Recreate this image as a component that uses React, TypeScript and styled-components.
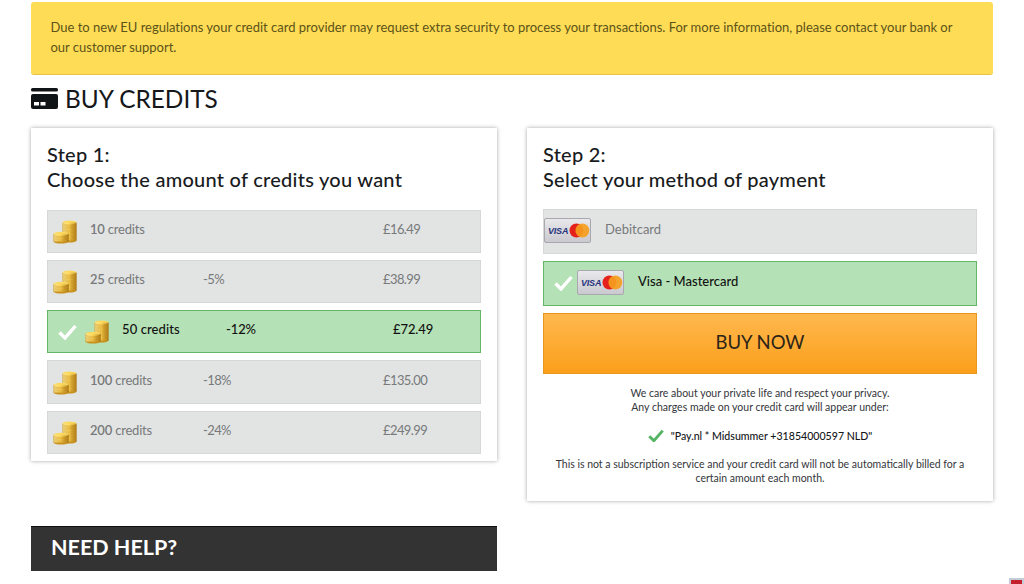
import React from "react";
import styled, { createGlobalStyle } from "styled-components";

const GlobalStyle = createGlobalStyle`
  html, body {
    margin: 0;
    padding: 0;
    height: 584px;
    overflow: hidden;
    background: #fff;
    font-family: Lato, "Liberation Sans", sans-serif;
  }
`;

const Page = styled.div`
  width: 962px;
  padding: 2px 0 0 31px;
`;

const Notice = styled.div`
  box-sizing: border-box;
  height: 73px;
  padding: 15px 20px 0 19.5px;
  background: #ffdc56;
  border-bottom: 1px solid #e6c345;
  border-radius: 3px;
  color: #5c5318;
  font-size: 13px;
  letter-spacing: -0.01px;
  line-height: 20px;
`;

const Title = styled.h1`
  display: flex;
  align-items: center;
  gap: 7px;
  height: 34px;
  margin: 6px 0 13px;
  color: #15171a;
  font-size: 24.4px;
  font-weight: 400;
`;

const Columns = styled.div`
  display: grid;
  grid-template-columns: 466px 466px;
  gap: 30px;
  align-items: start;
`;

const Card = styled.section<{ $bottom: number }>`
  box-sizing: border-box;
  padding: 14px 16px ${(p) => p.$bottom}px;
  background: #fff;
  box-shadow: 0 0 4px rgba(0, 0, 0, 0.35);
`;

const StepTitle = styled.h2`
  margin: 0 0 18.5px;
  color: #191b1d;
  font-size: 20px;
  font-weight: 500;
  letter-spacing: 0.25px;
  line-height: 24.5px;
`;

const Rows = styled.div<{ $gap: number }>`
  display: flex;
  flex-direction: column;
  gap: ${(p) => p.$gap}px;
`;

const MethodRows = styled(Rows)`
  margin-top: -0.5px;
`;

const CreditRow = styled.div<{ $selected?: boolean }>`
  box-sizing: border-box;
  display: grid;
  grid-template-columns: ${(p) => (p.$selected ? "27px 37px 104px 167px 1fr" : "0 37px 113px 180px 1fr")};
  align-items: center;
  height: 43.3px;
  padding-left: ${(p) => (p.$selected ? "10px" : "5px")};
  background: ${(p) => (p.$selected ? "#b5e1b6" : "#e2e4e4")};
  border: 1px solid ${(p) => (p.$selected ? "#62b767" : "#d6d8d8")};
  color: ${(p) => (p.$selected ? "#111" : "#77797a")};
  font-size: 13px;
  font-weight: ${(p) => (p.$selected ? 500 : 400)};
`;

const Cell = styled.span<{ $selected?: boolean }>`
  margin-bottom: 5px;
  letter-spacing: ${(p) => (p.$selected ? "0.1px" : "-0.2px")};
`;

const NumberCell = styled(Cell)`
  letter-spacing: ${(p) => (p.$selected ? "-0.1px" : "-0.6px")};
`;

const Amount = styled.b<{ $selected?: boolean }>`
  font-weight: ${(p) => (p.$selected ? 500 : 600)};
`;

const MethodRow = styled.div<{ $selected?: boolean }>`
  box-sizing: border-box;
  display: flex;
  align-items: center;
  height: 44.5px;
  padding-left: ${(p) => (p.$selected ? "10px" : "0")};
  background: ${(p) => (p.$selected ? "#b5e1b6" : "#e2e4e4")};
  border: 1px solid ${(p) => (p.$selected ? "#62b767" : "#d6d8d8")};
  color: ${(p) => (p.$selected ? "#111" : "#77797a")};
  font-size: 13px;
  font-weight: ${(p) => (p.$selected ? 500 : 400)};
`;

const CheckSlot = styled.span`
  display: flex;
`;

const MethodCheck = styled(CheckSlot)`
  width: 23px;
`;

const MethodLabel = styled.span`
  margin: 0 0 5px 14px;
`;

const VisaBadge = styled.span`
  box-sizing: border-box;
  display: flex;
  align-items: center;
  gap: 1px;
  width: 47px;
  height: 25px;
  margin-bottom: 1px;
  padding-left: 3px;
  background: linear-gradient(#e9e9ec, #c9c9cf);
  border: 1px solid #a8a8ae;
  border-radius: 2px;
  color: #27347c;
  font-family: "Liberation Sans", sans-serif;
  font-size: 9px;
  font-style: italic;
  font-weight: 700;
  letter-spacing: -0.2px;
`;

const BuyButton = styled.button`
  display: block;
  box-sizing: border-box;
  width: 100%;
  height: 61px;
  padding: 0 0 4px;
  background: linear-gradient(#ffb84e, #fb9f1a);
  border: 1px solid #e8961c;
  color: #2c2418;
  font-family: inherit;
  font-size: 18.5px;
`;

const Note = styled.p`
  margin: 0;
  color: #34363a;
  font-size: 10.5px;
  line-height: 13.5px;
  text-align: center;
`;

const Privacy = styled(Note)`
  margin-top: 13px;
  margin-bottom: 14px;
`;

const Descriptor = styled.div`
  display: flex;
  align-items: center;
  justify-content: center;
  gap: 7px;
  height: 15px;
  margin-bottom: 15px;
  color: #15171a;
  font-size: 10.6px;
  font-weight: 500;
`;

const HelpBar = styled.div`
  box-sizing: border-box;
  width: 466px;
  height: 45px;
  margin-top: 25px;
  padding-left: 20px;
  background: #333;
  border-top: 1px solid #111;
  color: #fff;
  font-size: 21.5px;
  font-weight: 700;
  line-height: 40px;
`;

const CornerWidget = styled.div`
  position: fixed;
  right: 0;
  bottom: 0;
  box-sizing: border-box;
  width: 15px;
  height: 6px;
  padding: 2px 0 0 2px;
  background: #c5cbd6;

  &::after {
    content: "";
    display: block;
    width: 11px;
    height: 4px;
    background: #c3202c;
  }
`;

function CardIcon() {
  return (
    <svg width="27" height="21" viewBox="0 0 27 21" fill="#111417">
      <rect x="0" y="0" width="27" height="3.5" rx="1.5" />
      <path d="M2 6h23a2 2 0 0 1 2 2v11a2 2 0 0 1-2 2H2a2 2 0 0 1-2-2V8a2 2 0 0 1 2-2z" />
      <rect x="3" y="14" width="5" height="3.5" fill="#fff" />
      <rect x="9.5" y="14" width="5" height="3.5" fill="#fff" />
    </svg>
  );
}

function Check({ color = "#fff", size = 19 }: { color?: string; size?: number }) {
  return (
    <svg width={size} height={size * 0.84} viewBox="0 0 19 16">
      <path d="M1.5 8.5 7 14 17.5 2" fill="none" stroke={color} strokeWidth="3.4" />
    </svg>
  );
}

function Coin({ cx, cy, rx }: { cx: number; cy: number; rx: number }) {
  return (
    <g>
      <rect x={cx - rx} y={cy} width={rx * 2} height="2.6" fill="#a87614" />
      <ellipse cx={cx} cy={cy + 2.6} rx={rx} ry="2" fill="#c8921e" />
      <ellipse cx={cx} cy={cy} rx={rx} ry="2" fill="#fbd95e" />
    </g>
  );
}

function Coins() {
  const tall = [19, 16.4, 13.8, 11.2, 8.6, 6, 3.4];
  const low = [20, 17.4, 14.8];
  return (
    <svg width="24" height="25" viewBox="0 0 24 25">
      <defs>
        <linearGradient id="coin-shine" x1="0" x2="1" y1="0" y2="0">
          <stop offset="0" stopColor="#fff3b0" stopOpacity="0.6" />
          <stop offset="0.5" stopColor="#ffd75a" stopOpacity="0.6" />
          <stop offset="1" stopColor="#8a5a0a" stopOpacity="0.3" />
        </linearGradient>
      </defs>
      {tall.map((y) => (
        <Coin key={y} cx={16.5} cy={y} rx={7} />
      ))}
      <rect x="9.5" y="3.4" width="14" height="18.2" fill="url(#coin-shine)" />
      {low.map((y) => (
        <Coin key={y} cx={8} cy={y} rx={7.6} />
      ))}
      <rect x="0.4" y="14.8" width="15.2" height="7.8" fill="url(#coin-shine)" />
    </svg>
  );
}

function Mastercard() {
  return (
    <svg width="21" height="15" viewBox="0 0 21 15">
      <circle cx="7.5" cy="7.5" r="7" fill="#e5211c" />
      <circle cx="13.5" cy="7.5" r="7" fill="#f59e1e" fillOpacity="0.92" />
    </svg>
  );
}

function Visa() {
  return (
    <VisaBadge>
      VISA
      <Mastercard />
    </VisaBadge>
  );
}

const credits = [
  { amount: 10, discount: "", price: "£16.49" },
  { amount: 25, discount: "-5%", price: "£38.99" },
  { amount: 50, discount: "-12%", price: "£72.49", selected: true },
  { amount: 100, discount: "-18%", price: "£135.00" },
  { amount: 200, discount: "-24%", price: "£249.99" },
];

export default function App() {
  return (
    <Page>
      <GlobalStyle />
      <Notice>
        Due to new EU regulations your credit card provider may request extra security to process your transactions. For
        more information, please contact your bank or our customer support.
      </Notice>
      <Title>
        <CardIcon />
        BUY CREDITS
      </Title>
      <Columns>
        <Card $bottom={7}>
          <StepTitle>
            Step 1:
            <br />
            Choose the amount of credits you want
          </StepTitle>
          <Rows $gap={7}>
            {credits.map((c) => (
              <CreditRow key={c.amount} $selected={c.selected}>
                <CheckSlot>{c.selected && <Check />}</CheckSlot>
                <Coins />
                <Cell $selected={c.selected}>
                  <Amount $selected={c.selected}>{c.amount}</Amount> credits
                </Cell>
                <NumberCell $selected={c.selected}>{c.discount}</NumberCell>
                <NumberCell $selected={c.selected}>{c.price}</NumberCell>
              </CreditRow>
            ))}
          </Rows>
        </Card>
        <Card $bottom={16}>
          <StepTitle>
            Step 2:
            <br />
            Select your method of payment
          </StepTitle>
          <MethodRows $gap={7.5}>
            <MethodRow>
              <Visa />
              <MethodLabel>Debitcard</MethodLabel>
            </MethodRow>
            <MethodRow $selected>
              <MethodCheck>
                <Check />
              </MethodCheck>
              <Visa />
              <MethodLabel>Visa - Mastercard</MethodLabel>
            </MethodRow>
            <BuyButton>BUY NOW</BuyButton>
          </MethodRows>
          <Privacy>
            We care about your private life and respect your privacy.
            <br />
            Any charges made on your credit card will appear under:
          </Privacy>
          <Descriptor>
            <Check color="#55b464" size={16} />
            "Pay.nl * Midsummer +31854000597 NLD"
          </Descriptor>
          <Note>
            This is not a subscription service and your credit card will not be automatically billed for a certain amount
            each month.
          </Note>
        </Card>
      </Columns>
      <HelpBar>NEED HELP?</HelpBar>
      <CornerWidget />
    </Page>
  );
}
